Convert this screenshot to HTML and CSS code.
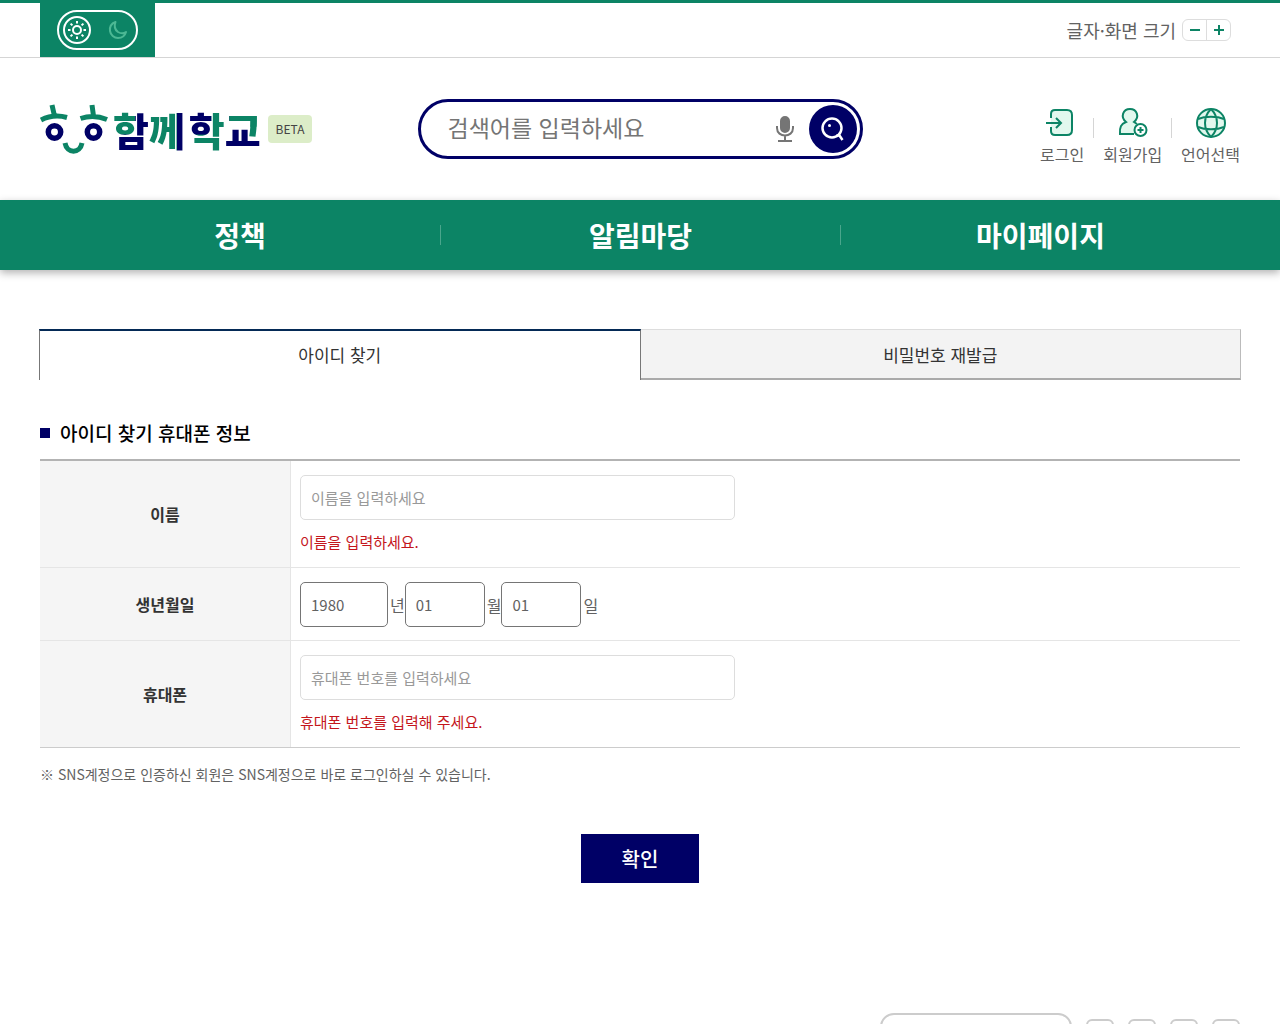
FILE: index.html
```
<!DOCTYPE html>
<html lang="ko">
<head>
    <meta charset="UTF-8">
    <meta name="viewport" content="width=device-width, initial-scale=1.0">
    <title>아이디 찾기 - 함께학교</title>
    <link rel="stylesheet" href="styles.css">
</head>
<body>
    <div class="top-bar">
        <div class="container top-inner">
            <div class="theme-box">
                <button type="button" class="theme-toggle" aria-label="화면 모드 변경">
                    <svg class="sun" viewBox="0 0 28 28" width="28" height="28" fill="none" stroke="#fff" stroke-width="2">
                        <circle cx="14" cy="14" r="13"/>
                        <circle cx="14" cy="14" r="4"/>
                        <path d="M14 5v2.5M14 20.500v2.500M5 14h2.500M20.500 14h2.500M7.600 7.600l1.800 1.800M18.600 18.600l1.800 1.800M7.600 20.400l1.800-1.800M18.600 9.400l1.800-1.800"/>
                    </svg>
                    <svg class="moon" viewBox="0 0 20 20" width="20" height="20" fill="none" stroke="#4cb894" stroke-width="2" stroke-linejoin="round">
                        <path d="M7.500 2C3.500 3.500 1.500 7 2 11c.6 4 4 7 8 7 4 0 7-2.500 8-6-2 1.500-5.500 1.500-8 0C7 9.800 6 6 7.500 2z"/>
                    </svg>
                </button>
            </div>
            <div class="zoom">
                <span>글자·화면 크기</span>
                <div class="zoom-buttons">
                    <button type="button" aria-label="축소"><svg viewBox="0 0 12 12" width="12" height="12" stroke="#0c8465" stroke-width="2"><path d="M1 6h10"/></svg></button>
                    <button type="button" aria-label="확대"><svg viewBox="0 0 12 12" width="12" height="12" stroke="#0c8465" stroke-width="2"><path d="M1 6h10M6 1v10"/></svg></button>
                </div>
            </div>
        </div>
    </div>

    <header class="container header">
        <a href="#" class="logo">
            <svg class="logo-face" viewBox="0 0 68 50" width="68" height="50" fill="none">
                <g stroke="#0c8465" stroke-width="5">
                    <path d="M12 1l2.500 11M1 16c8-4 17-5 26-2.500"/>
                    <path d="M52 1l1.500 11M40.500 14.500c9-3 18-2.500 26.500 1"/>
                    <path d="M25 39c2 11 15 11 17 0"/>
                </g>
                <g stroke="#000066" stroke-width="5.500">
                    <circle cx="14.500" cy="28" r="6.200"/>
                    <circle cx="53.500" cy="28" r="6.200"/>
                </g>
            </svg>
            <span class="logo-text"><span class="ham">함</span><span class="kke">께</span><span class="hak">학</span><span class="gyo">교</span></span>
            <span class="beta">BETA</span>
        </a>

        <form class="search">
            <input type="text" aria-label="검색어" placeholder="검색어를 입력하세요">
            <button type="button" class="mic" aria-label="음성 검색">
                <svg viewBox="0 0 18 26" width="18" height="26" fill="none" stroke="#757575" stroke-width="2">
                    <rect x="5" y="1" width="8" height="15" rx="4" fill="#757575"/>
                    <path d="M1 10v2c0 10 16 10 16 0v-2M9 19v6M2 25h14"/>
                </svg>
            </button>
            <button type="submit" class="search-button" aria-label="검색">
                <svg viewBox="0 0 24 26" width="24" height="26" fill="none" stroke="#fff">
                    <circle cx="11" cy="12" r="9.500" stroke-width="2.500"/>
                    <path d="M15.500 19.500h3l3 4.500" stroke-width="2.500"/>
                    <circle cx="8.500" cy="9.500" r="1.500" fill="#fff" stroke="none"/>
                </svg>
            </button>
        </form>

        <ul class="user-menu">
            <li><a href="#">
                <svg viewBox="0 0 32 32" width="32" height="32" fill="none" stroke="#0c8465" stroke-width="2">
                    <path d="M5 11V7c0-3 1.500-4 4-4h12c3 0 5 2 5 5v15c0 3-2 5-5 5H9c-2.500 0-4-1.500-4-4v-4" fill="#e2f8ee"/>
                    <path d="M0 16h14M10 11l5 5-5 5"/>
                </svg>
                로그인</a></li>
            <li><a href="#">
                <svg viewBox="0 0 32 32" width="32" height="32" fill="none" stroke="#0c8465" stroke-width="2">
                    <path d="M17 27H3c-.5-7 1-10 6-12-6-5-3-13 4-13s10 8 4 13l3 2" fill="#e2f8ee"/>
                    <circle cx="23.500" cy="23" r="6" fill="#fff"/>
                    <path d="M20.500 23h6M23.500 20v6"/>
                </svg>
                회원가입</a></li>
            <li><a href="#">
                <svg viewBox="0 0 32 32" width="32" height="32" fill="none" stroke="#0c8465" stroke-width="2">
                    <circle cx="16" cy="16" r="14" fill="#e2f8ee"/>
                    <path d="M16 2c-8 8-8 20 0 28M16 2c8 8 8 20 0 28M3 12c7-3 19-3 26 0M3 20c7 3 19 3 26 0"/>
                </svg>
                언어선택</a></li>
        </ul>
    </header>

    <nav class="main-nav">
        <ul class="container">
            <li><a href="#">정책</a></li>
            <li><a href="#">알림마당</a></li>
            <li><a href="#">마이페이지</a></li>
        </ul>
    </nav>

    <main class="container">
        <div class="tabs">
            <a href="#" class="active">아이디 찾기</a>
            <a href="#">비밀번호 재발급</a>
        </div>

        <form>
            <h2>아이디 찾기 휴대폰 정보</h2>
            <table>
                <tr>
                    <th><label for="userName">이름</label></th>
                    <td>
                        <input type="text" id="userName" class="text-input" placeholder="이름을 입력하세요">
                        <p class="error">이름을 입력하세요.</p>
                    </td>
                </tr>
                <tr>
                    <th><label for="year">생년월일</label></th>
                    <td>
                        <div class="birth">
                            <input type="text" id="year" class="year" value="1980"><label for="year">년</label>
                            <input type="text" id="month" value="01"><label for="month">월</label>
                            <input type="text" id="day" value="01"><label for="day">일</label>
                        </div>
                    </td>
                </tr>
                <tr>
                    <th><label for="phone">휴대폰</label></th>
                    <td>
                        <input type="tel" id="phone" class="text-input" placeholder="휴대폰 번호를 입력하세요">
                        <p class="error">휴대폰 번호를 입력해 주세요.</p>
                    </td>
                </tr>
            </table>
            <p class="note">※ SNS계정으로 인증하신 회원은 SNS계정으로 바로 로그인하실 수 있습니다.</p>
            <button type="submit" class="submit">확인</button>
        </form>
    </main>

    <footer class="container footer">
        <a href="#" class="family" aria-label="관련 사이트"></a>
        <a href="#" class="sns" aria-label="블로그"></a>
        <a href="#" class="sns" aria-label="페이스북"></a>
        <a href="#" class="sns" aria-label="인스타그램"></a>
        <a href="#" class="sns" aria-label="유튜브"></a>
    </footer>
</body>
</html>
```
FILE: styles.css
```
* {
    box-sizing: border-box;
}
body {
    margin: 0;
    font-family: "Noto Sans CJK KR", sans-serif;
    font-size: 16px;
    line-height: 24px;
    color: #626262;
    background-color: #fff;
}
a {
    color: inherit;
    text-decoration: none;
}
ul, p, h2 {
    margin: 0;
    padding: 0;
    list-style: none;
}
input, button {
    font-family: inherit;
    font-size: 15px;
    color: inherit;
}
button {
    border: none;
    padding: 0;
    background: none;
    cursor: pointer;
}
svg {
    display: block;
}
.container {
    max-width: 1280px;
    margin: 0 auto;
    padding: 0 40px;
}

/* top bar */
.top-bar {
    border-top: 3px solid #0c8465;
    border-bottom: 1px solid #d5d5d5;
}
.top-inner {
    display: flex;
    justify-content: space-between;
    align-items: center;
    height: 54px;
}
.theme-box {
    display: flex;
    align-items: center;
    justify-content: center;
    width: 115px;
    height: 54px;
    background-color: #0c8465;
}
.theme-toggle {
    display: flex;
    align-items: center;
    justify-content: space-between;
    width: 81px;
    height: 40px;
    padding: 0 8px 0 4px;
    border: 2px solid #fff;
    border-radius: 20px;
}
.zoom {
    display: flex;
    align-items: center;
    gap: 6px;
    padding-right: 9px;
    font-size: 18px;
}
.zoom-buttons {
    display: flex;
    border: 1px solid #ddd;
    border-radius: 6px;
}
.zoom-buttons button {
    display: flex;
    align-items: center;
    justify-content: center;
    width: 23px;
    height: 20px;
}
.zoom-buttons button + button {
    width: 24px;
    border-left: 1px solid #ddd;
}

/* header */
.header {
    display: grid;
    grid-template-columns: 1fr 445px 1fr;
    align-items: center;
    height: 142px;
}
.logo {
    display: flex;
    align-items: center;
}
.logo-text {
    display: flex;
    margin-left: 5px;
    font-size: 39px;
    font-weight: 900;
    line-height: 56px;
}
.logo-text span {
    color: transparent;
    background-color: #000066;
    background-repeat: no-repeat;
    background-image: linear-gradient(#0c8465, #0c8465);
    -webkit-background-clip: text;
    background-clip: text;
}
.ham {
    background-size: 62% 60%;
}
.kke {
    background-size: 78% 100%;
}
.logo-text .hak {
    margin-left: 4px;
    background-color: #0c8465;
    background-image: linear-gradient(#000066, #000066);
    background-size: 62% 60%;
}
.logo-text .gyo {
    background-image: linear-gradient(#0c8465, #0c8465), linear-gradient(#0c8465, #0c8465);
    background-position: top left, top right;
    background-size: 100% 46%, 32% 66%;
}
.beta {
    margin-left: 7px;
    padding: 0 8px;
    border-radius: 4px;
    background-color: #dcedc8;
    color: #444;
    font-size: 12px;
    line-height: 28px;
}
.search {
    display: flex;
    align-items: center;
    height: 60px;
    padding: 0 3px 0 27px;
    border: 3px solid #000066;
    border-radius: 30px;
}
.search input {
    flex: 1;
    min-width: 0;
    padding: 0 0 4px;
    border: none;
    outline: none;
    font-size: 23px;
}
.search input::placeholder {
    color: #757575;
}
.mic {
    margin-right: 15px;
}
.search-button {
    display: flex;
    align-items: center;
    justify-content: center;
    width: 48px;
    height: 48px;
    border-radius: 50%;
    background-color: #000066;
}
.user-menu {
    display: flex;
    justify-content: flex-end;
    gap: 18px;
    padding-top: 14px;
}
.user-menu li {
    display: flex;
    align-items: center;
}
.user-menu li + li::before {
    content: "";
    width: 1px;
    height: 20px;
    margin: 0 9px 16px -9px;
    background-color: #d5d5d5;
}
.user-menu a {
    display: flex;
    flex-direction: column;
    align-items: center;
    gap: 3px;
}

/* main menu */
.main-nav {
    background-color: #0c8465;
    box-shadow: 0 3px 8px rgba(0, 0, 0, 0.3);
}
.main-nav ul {
    display: flex;
}
.main-nav li {
    display: flex;
    align-items: center;
    flex: 1;
}
.main-nav li + li::before {
    content: "";
    width: 1px;
    height: 20px;
    background-color: #4aa68c;
}
.main-nav a {
    flex: 1;
    color: #fff;
    font-size: 28px;
    font-weight: 700;
    line-height: 70px;
    text-align: center;
}

/* tabs */
.tabs {
    display: flex;
    margin: 59px -1px 0;
}
.tabs a {
    flex: 1;
    height: 51px;
    border: 1px solid #bbb;
    border-top-color: #ddd;
    border-bottom: 2px solid #aaa;
    border-left: none;
    background-color: #f3f3f3;
    color: #333;
    font-size: 17px;
    line-height: 49px;
    text-align: center;
}
.tabs .active {
    border: 1px solid #777;
    border-top: 2px solid #052a56;
    border-bottom: none;
    background-color: #fff;
    line-height: 47px;
}

/* form */
h2 {
    display: flex;
    align-items: center;
    gap: 10px;
    margin: 38px 0 11px;
    color: #000;
    font-size: 19px;
    font-weight: 500;
    line-height: 30px;
}
h2::before {
    content: "";
    width: 10px;
    height: 10px;
    background-color: #000066;
}
table {
    width: 100%;
    border-spacing: 0;
    border-top: 2px solid #b3b3b3;
    border-bottom: 1px solid #ccc;
}
th {
    width: 251px;
    padding: 0;
    border-right: 1px solid #e5e5e5;
    background-color: #f5f5f5;
    color: #333;
    font-weight: 700;
}
td {
    padding: 14px 9px 13px;
}
tr + tr th, tr + tr td {
    border-top: 1px solid #e5e5e5;
}
td input {
    display: block;
    width: 80px;
    height: 45px;
    padding: 0 10px;
    border: 1px solid #757575;
    border-radius: 5px;
}
.text-input {
    width: 435px;
    max-width: 100%;
    border-color: #ddd;
}
.text-input::placeholder {
    color: #999;
}
.error {
    margin-top: 10px;
    color: #c4161c;
    font-size: 15px;
}
.birth {
    display: flex;
    align-items: center;
}
.birth label {
    margin-left: 2px;
}
.birth .year {
    width: 88px;
}
.note {
    margin-top: 14px;
    font-size: 14px;
}
.submit {
    display: block;
    width: 118px;
    height: 49px;
    margin: 48px auto 0;
    background-color: #000066;
    color: #fff;
    font-size: 20px;
    font-weight: 500;
}

/* footer */
.footer {
    display: flex;
    align-items: center;
    justify-content: flex-end;
    gap: 14px;
    margin-top: 130px;
    padding-bottom: 40px;
}
.family {
    width: 192px;
    height: 40px;
    border: 2px solid #ccc;
    border-radius: 14px;
}
.sns {
    width: 28px;
    height: 28px;
    border: 2px solid #ccc;
    border-radius: 6px;
}
```
